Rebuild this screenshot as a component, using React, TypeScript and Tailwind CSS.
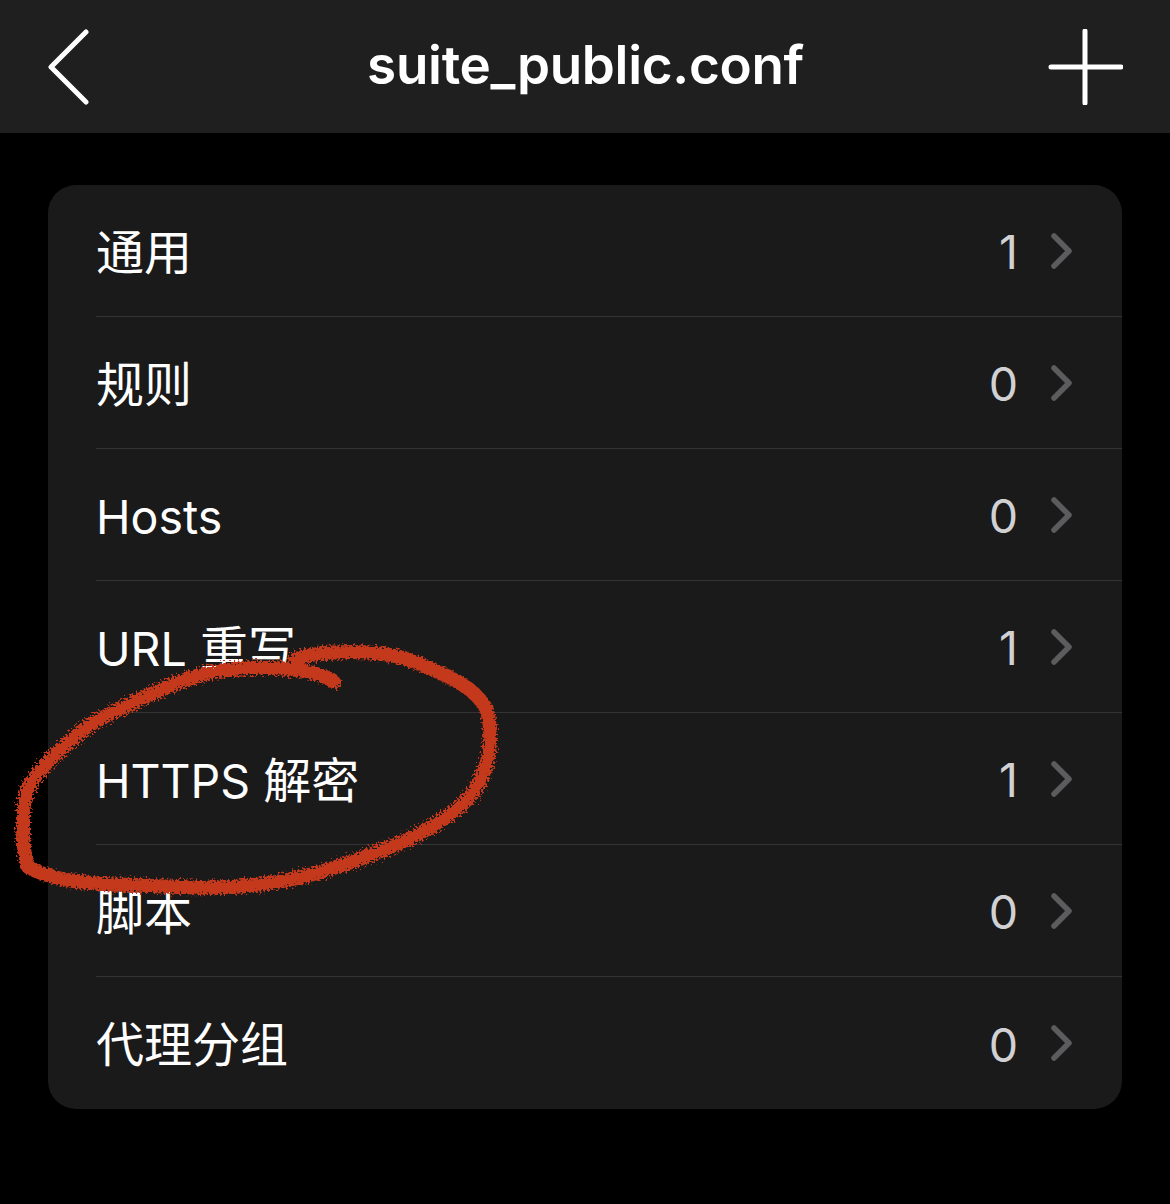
const rows = [
  { latin: "", cjk: "通用", count: 1 },
  { latin: "", cjk: "规则", count: 0 },
  { latin: "Hosts", cjk: "", count: 0 },
  { latin: "URL ", cjk: "重写", count: 1 },
  { latin: "HTTPS ", cjk: "解密", count: 1 },
  { latin: "", cjk: "脚本", count: 0 },
  { latin: "", cjk: "代理分组", count: 0 },
];

function Row({ latin, cjk, count, last }: { latin: string; cjk: string; count: number; last: boolean }) {
  return (
    <div className="h-[132px] pl-12 flex">
      <div className={`flex-1 flex items-center pr-[48px] ${last ? "" : "border-b border-[#333335]"}`}>
        <span className="flex-1 pt-1 text-[46.5px] leading-none text-white whitespace-pre">
          {latin}
          <span className="text-[48px]">{cjk}</span>
        </span>
        <span className="pt-1 text-[46.5px] leading-none text-[#d1d1d3]">{count}</span>
        <svg className="ml-[30px] w-[26px] h-[40px]" viewBox="0 0 26 40" fill="none">
          <path d="M6 5 L21 20 L6 35" stroke="#5c5c5e" strokeWidth="5.5" strokeLinecap="round" strokeLinejoin="round" />
        </svg>
      </div>
    </div>
  );
}

function Scribble() {
  return (
    <svg className="absolute left-0 top-0 w-[520px] h-[920px] pointer-events-none" viewBox="0 0 520 920" fill="none">
      <defs>
        <filter id="rough" x="-5%" y="-5%" width="110%" height="110%">
          <feTurbulence type="fractalNoise" baseFrequency="0.5" numOctaves="3" seed="7" />
          <feDisplacementMap in="SourceGraphic" scale="11" />
          <feGaussianBlur stdDeviation="0.5" />
        </filter>
      </defs>
      <path
        d="M334 682 C322 672 290 667 250 668 C225 669 208 672 193 677 C175 683 160 690 143 698 C125 707 110 713 93 723 C78 733 62 748 50 760 C40 770 32 780 27 790 C23 802 23 815 23 827 C23 842 24 856 28 867 C38 873 52 877 67 880 C90 884 110 885 133 885 C165 887 200 888 233 887 C262 885 290 881 317 873 C345 865 372 855 400 843 C425 832 448 818 467 800 C480 786 486 770 489 753 C491 738 491 722 486 708 C480 698 472 690 460 683 C442 673 420 663 400 657 C384 653 367 652 350 652 C330 652 310 654 296 659"
        stroke="#c4371b"
        strokeWidth="14"
        strokeLinecap="round"
        strokeLinejoin="round"
        filter="url(#rough)"
      />
    </svg>
  );
}

export default function App() {
  return (
    <div className="relative w-[1170px] h-[1204px] bg-black overflow-hidden font-['Inter','Noto_Sans_CJK_SC',sans-serif]">
      <header className="h-[133px] bg-[#1f1f1f] flex items-center justify-between pl-12 pr-[47px]">
        <div className="w-[76px]">
          <svg className="w-[42px] h-[76px]" viewBox="0 0 42 76" fill="none">
            <path d="M38 3 L3 38 L38 73" stroke="#fff" strokeWidth="5" strokeLinecap="round" strokeLinejoin="round" />
          </svg>
        </div>
        <h1 className="pb-[3px] text-[53px] leading-none font-semibold tracking-[-0.3px] text-white">suite_public.conf</h1>
        <svg className="w-[76px] h-[76px]" viewBox="0 0 76 76" fill="none">
          <path d="M38 2 V74 M4 38 H74" stroke="#fff" strokeWidth="5" strokeLinecap="round" />
        </svg>
      </header>
      <main className="pt-[52px] px-12">
        <div className="bg-[#1a1a1b] rounded-[28px] overflow-hidden">
          {rows.map((r, i) => (
            <Row key={r.latin + r.cjk} latin={r.latin} cjk={r.cjk} count={r.count} last={i === rows.length - 1} />
          ))}
        </div>
      </main>
      <Scribble />
    </div>
  );
}
